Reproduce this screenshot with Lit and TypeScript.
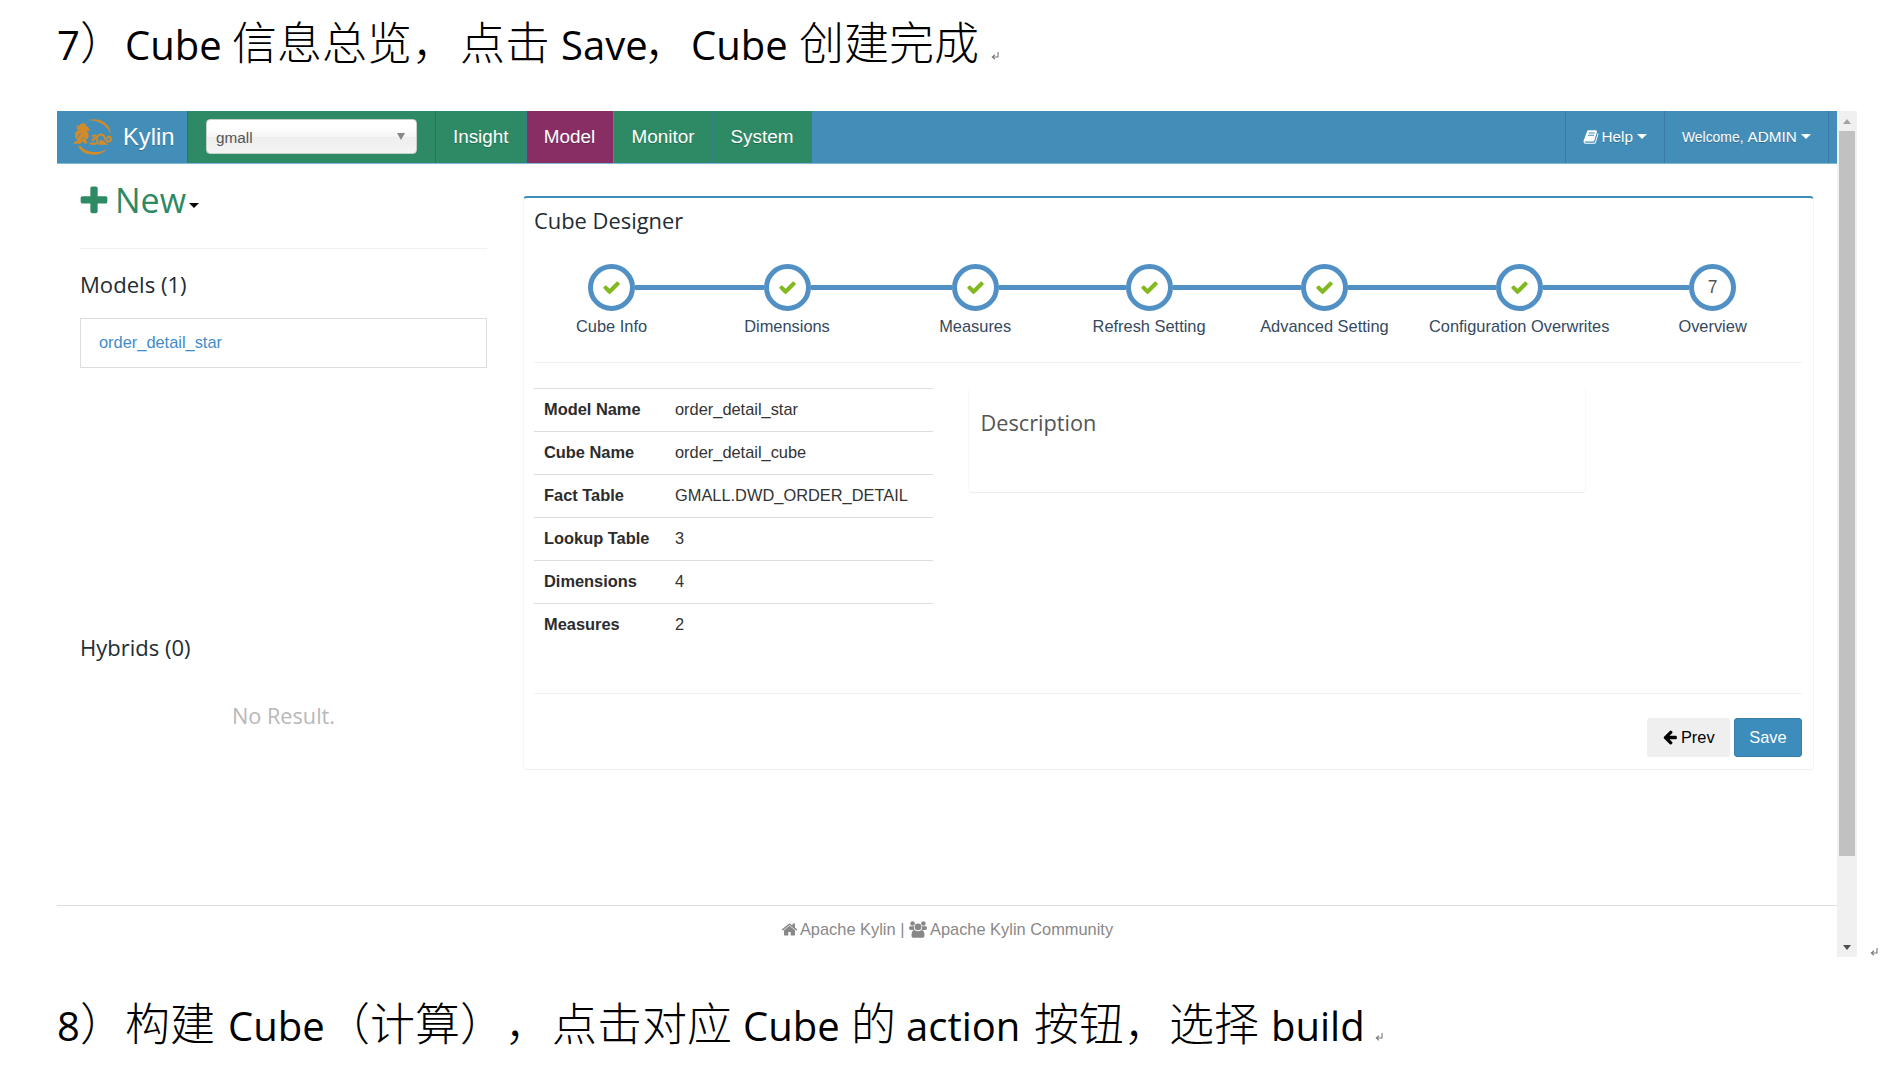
import { LitElement, html, css, svg } from "lit";
import { customElement } from "lit/decorators.js";

type Run = [text: string, width: number, latin?: boolean];

/* Captions above and below the window: each run has its own advance width. */
const CAPTION_TOP: Run[] = [
  ["7", 23, true], ["）", 45], ["Cube", 107, true], ["信息总览，", 228], ["点击", 101], ["Save", 83, true],
  ["，", 47], ["Cube", 108, true], ["创建完成", 192],
];
const CAPTION_BOTTOM: Run[] = [
  ["8", 23, true], ["）", 45], ["构建", 103], ["Cube", 97, true], ["（计算），", 227], ["点击对应", 191],
  ["Cube", 108, true], ["的", 55], ["action", 128, true], ["按钮，选择", 237], ["build", 104, true],
];

const STEPS: { label: string; gap: number; mark?: string }[] = [
  { label: "Cube Info", gap: 0 },
  { label: "Dimensions", gap: 128.5 },
  { label: "Measures", gap: 141.2 },
  { label: "Refresh Setting", gap: 126.9 },
  { label: "Advanced Setting", gap: 128.3 },
  { label: "Configuration Overwrites", gap: 147.8 },
  { label: "Overview", gap: 146.4, mark: "7" },
];

const ROWS = [
  ["Model Name", "order_detail_star"],
  ["Cube Name", "order_detail_cube"],
  ["Fact Table", "GMALL.DWD_ORDER_DETAIL"],
  ["Lookup Table", "3"],
  ["Dimensions", "4"],
  ["Measures", "2"],
];

const ICONS: Record<string, string> = {
  check: "M1671 566q0 40-28 68l-724 724-136 136q-28 28-68 28t-68-28l-136-136-362-362q-28-28-28-68t28-68l136-136q28-28 68-28t68 28l294 295 656-657q28-28 68-28t68 28l136 136q28 28 28 68z",
  plus: "M1600 736v192q0 40-28 68t-68 28h-416v416q0 40-28 68t-68 28h-192q-40 0-68-28t-28-68v-416h-416q-40 0-68-28t-28-68v-192q0-40 28-68t68-28h416v-416q0-40 28-68t68-28h192q40 0 68 28t28 68v416h416q40 0 68 28t28 68z",
  home: "M1472 992v480q0 26-19 45t-45 19h-384v-384h-256v384h-384q-26 0-45-19t-19-45v-480q0-1 .5-3t.5-3l575-474 575 474q1 2 1 6zm223-69l-62 74q-8 9-21 11h-3q-13 0-21-7l-692-577-692 577q-12 8-24 7-13-2-21-11l-62-74q-8-10-7-23.5t11-21.5l719-599q32-26 76-26t76 26l244 204v-195q0-14 9-23t23-9h192q14 0 23 9t9 23v408l219 182q10 8 11 21.5t-7 23.5z",
  left: "M1664 896v128q0 53-32.5 90.5t-84.5 37.5h-704l293 294q38 36 38 90t-38 90l-75 76q-37 37-90 37-52 0-91-37l-651-652q-37-37-37-90 0-52 37-91l651-650q38-38 91-38 52 0 90 38l75 74q38 38 38 91t-38 91l-293 293h704q52 0 84.5 37.5t32.5 90.5z",
  book: "M1703 478q40 57 18 129l-275 906q-19 64-76.5 107.5t-122.5 43.5h-923q-77 0-148.5-53.5t-99.5-131.5q-24-67-2-127 0-4 3-27t4-37q1-8-3-21.5t-3-19.5q2-11 8-21t16.5-23.5 16.5-23.5q23-38 45-91.5t30-91.5q3-10 .5-30t-.5-28q3-11 17-28t17-23q21-36 42-92t25-90q1-9-2.5-32t.5-28q4-13 22-30.5t22-22.5q19-26 42.5-84.5t27.5-96.5q1-8-3-25.5t-2-26.5q2-8 9-18t18-23 17-21q8-12 16.5-30.5t15-35 16-36 19.5-32 26.5-23.5 36-11.5 47.5 5.5l-1 3q38-9 51-9h761q74 0 114 56t18 130l-274 906q-36 119-71.5 153.5t-128.5 34.5h-869q-27 0-38 15-11 16-1 43 24 70 144 70h923q29 0 56-15.5t35-41.5l300-987q7-22 5-57 38 15 59 43zm-1064 2q-4 13 2 22.5t20 9.5h608q13 0 25.5-9.5t16.5-22.5l21-64q4-13-2-22.5t-20-9.5h-608q-13 0-25.5 9.5t-16.5 22.5zm-83 256q-4 13 2 22.5t20 9.5h608q13 0 25.5-9.5t16.5-22.5l21-64q4-13-2-22.5t-20-9.5h-608q-13 0-25.5 9.5t-16.5 22.5z",
};

const icon = (name: string) => html`<svg class="icon ${name}" viewBox="0 0 1792 1792">${svg`<path d=${ICONS[name]} />`}</svg>`;

const logo = html`<svg class="logo" viewBox="0 0 120 112">
  <path d="M46 6C82-3 114 18 113 50C107 26 80 7 46 6Z" />
  <path d="M15 84C28 114 78 120 103 92C80 107 40 106 23 84Z" />
  <path d="M30 10l3 8 7-2-1 7c8 4 12 10 10 17l-8-3c1 5 5 8 6 14 1 7-3 12-9 15 4 3 7 8 3 11l-8-2-4-5-7 7H0l7-7 8-3C4 60 3 48 10 40l8-5-8-3 3-4-4-6 10 1 4-6 5 1z" />
  <path class="swirl" d="M50 77h17c8 0 9-15-1-16-7 0-8 7-3 8M58 56c6-6 13-3 15 3" />
  <path class="swirl" d="M71 60c6-14 20-14 24-2 2 8 5 14 12 13 10-2 8-17-1-15-4 1-3 6 0 6" />
  <path d="M74 80c6-4 2-12 10-14 8 0 10 7 23 14z" />
  <path class="cut" d="M15 60c0-7 4-11 10-14M24 66c2-5 6-7 11-7" />
</svg>`;

const community = html`<svg class="icon users" viewBox="0 0 18 17">
  <circle cx="3.6" cy="2.5" r="2.3" /><circle cx="14.4" cy="2.5" r="2.3" />
  <path d="M1 5.2h4.3a4.5 4.5 0 0 0 .2 3.8H1.8Q0 9 0 7.2T1 5.2zM17 5.2h-4.3a4.5 4.5 0 0 1-.2 3.8h3.7Q18 9 18 7.2T17 5.2z" />
  <circle cx="9" cy="5.9" r="3.3" />
  <path d="M5.4 9q3.6 2.6 7.2 0 2.9.6 2.9 5.2 0 2.6-2.6 2.6H5.1q-2.6 0-2.6-2.6Q2.5 9.6 5.4 9z" />
</svg>`;

const returnMark = html`<svg class="mark" viewBox="0 0 8 8"><path d="M7 0v5H2M4 2.6L1.3 5 4 7.4" /></svg>`;

const caption = (runs: Run[], place: string) => html`<div class="caption ${place}">
  ${runs.map(([t, w, latin]) => html`<span class=${latin ? "latin" : "han"} style="width:${w}px">${t}</span>`)}${returnMark}
</div>`;

@customElement("app-root")
export class AppRoot extends LitElement {
  static styles = css`
    :host {
      display: block;
      width: 1885px;
      height: 1072px;
      overflow: hidden;
      background: #fff;
      color: #333;
      font-family: "Liberation Sans", Arial, sans-serif;
      font-size: 16.4px;
    }
    * { box-sizing: border-box; }
    .icon { display: block; flex: none; fill: currentColor; }
    .caption {
      display: flex;
      align-items: baseline;
      padding-left: 57px;
      color: #000;
      white-space: nowrap;
    }
    .high { height: 111px; --line: 82px; }
    .low { height: 115px; padding-top: 15px; --line: 100px; }
    .latin { flex: none; font: 400 40px/var(--line) "Open Sans", "Noto Sans", sans-serif; }
    .han { flex: none; font: 300 45px/var(--line) "Noto Sans CJK SC", sans-serif; text-spacing-trim: space-all; }
    .mark { width: 8px; height: 8px; fill: none; stroke: #777; stroke-width: 1.1; flex: none; }
    .stage { display: flex; height: 846px; padding-left: 57px; }
    .window { width: 1780px; display: flex; flex-direction: column; }

    .nav {
      display: flex;
      height: 52.5px;
      flex: none;
      background: #438eb9;
      border-bottom: 1px solid #83b7d6;
      color: #fff;
      font-size: 18.9px;
      line-height: 52px;
      text-shadow: 0 1px 0 rgba(0, 0, 0, 0.25);
    }
    .brand { width: 130px; display: flex; align-items: center; padding-left: 16px; gap: 10px; font-size: 23.8px; }
    .logo { width: 40px; height: 37.3px; fill: #d38a28; }
    .swirl { fill: none; stroke: #d38a28; stroke-width: 6; }
    .cut { fill: none; stroke: #438eb9; stroke-width: 2.5; }
    .picker { width: 249px; background: #2e8965; border-left: 1px solid #277a5c; border-right: 1px solid #26745a; padding: 8px 0 0 18px; }
    .select {
      width: 211px;
      height: 35px;
      display: flex;
      align-items: center;
      justify-content: space-between;
      padding: 2px 11px 0 9px;
      border: 1px solid #c5d0cb;
      border-radius: 4px;
      background: linear-gradient(#fff 20%, #f6f6f6 50%, #eee 52%, #f4f4f4);
      color: #555;
      font-size: 15.3px;
      line-height: 30px;
      text-shadow: none;
    }
    .drop { width: 0; border: 4px solid transparent; border-top: 7px solid #888; border-bottom: 0; margin-top: -3px; }
    .tab { background: #2e8965; border-right: 1px solid #377f89; text-align: center; }
    .insight { width: 90.5px; }
    .model { width: 87px; background: #892e65; border-right: 1px solid #438eb9; }
    .monitor { width: 99px; padding-left: 1px; }
    .system { width: 99px; padding-left: 1px; }
    .fill { flex: 1; }
    .menu { display: flex; align-items: center; border-left: 1px solid #3a7ba6; font-size: 15.3px; }
    .help { width: 99px; padding-left: 17px; }
    .user { width: 164.5px; padding-left: 17.5px; }
    .end { width: 9px; border-left: 1px solid #3a7ba6; }
    .book { width: 16px; height: 16px; margin-right: 3px; }
    .small { font-size: 13.9px; margin-right: 4px; }
    .caret { width: 0; border: 5px solid transparent; border-top: 5px solid currentColor; border-bottom: 0; margin-left: 4px; }

    .body { display: flex; flex: 1; min-height: 0; }
    .side { width: 407px; margin-left: 23px; }
    .head { font-family: "Open Sans", "Noto Sans", sans-serif; font-size: 21.9px; line-height: 30px; white-space: nowrap; color: #222d32; }
    .new { display: flex; align-items: center; margin-top: 17px; height: 39px; color: #2e8965; font-size: 34px; line-height: 39px; }
    .plus { width: 34px; height: 34px; margin: 2px 4px 0 -3px; }
    .new .caret { color: #000; margin: 11px 0 0 3px; }
    .rule { height: 1px; background: #f0f0f0; }
    .side .rule { margin-top: 28.5px; }
    .models { margin-top: 19.5px; font-size: 22.1px; }
    .item { margin-top: 19.5px; height: 50px; border: 1px solid #ddd; padding-left: 18px; line-height: 47px; color: #428bca; }
    .hybrids { margin-top: 263.5px; font-size: 22px; }
    .none { margin-top: 39px; text-align: center; color: #b8b8b8; font-size: 21.7px; }

    .panel {
      width: 1291px;
      height: 574px;
      margin: 32.5px 0 0 36px;
      padding: 8px 11px 0 10px;
      border: 1px solid #f4f4f4;
      border-top: 2.5px solid #3c8dbc;
      border-bottom: 1.5px solid #efefef;
      border-radius: 4px;
    }
    .steps { display: flex; margin: 28px 0 0 54px; height: 73px; }
    .step { width: 47px; flex: none; display: flex; flex-direction: column; align-items: center; }
    .ring {
      width: 47px;
      height: 47px;
      display: grid;
      place-items: center;
      border: 5.5px solid #5090c4;
      border-radius: 50%;
      font-size: 17.5px;
      color: #555;
    }
    .check { width: 19px; height: 19px; color: #82b91e; }
    .link { flex: none; height: 5px; margin-top: 20.5px; background: #5090c4; }
    .label { margin-top: 4.5px; line-height: 20px; white-space: nowrap; color: #34495e; }
    .r1 { margin-top: 25px; }
    .info { display: flex; margin-top: 25px; height: 305px; }
    .table { width: 398.5px; }
    .row { display: flex; height: 43.1px; border-top: 1px solid #ddd; line-height: 41px; padding-left: 10px; }
    .key { width: 131px; font-weight: 700; color: #2c2c2c; }
    .desc {
      width: 618px;
      height: 104.5px;
      margin-left: 35px;
      padding: 19px 0 0 12px;
      border: 1px solid #f8f8f8;
      border-top-color: #fff;
      border-bottom: 1.5px solid #ececec;
      border-radius: 4px;
    }
    .desc .head { color: #555; font-size: 21.7px; }
    .actions { display: flex; justify-content: flex-end; gap: 4.5px; margin-top: 23.5px; }
    .btn { height: 39.5px; display: flex; align-items: center; justify-content: center; border-radius: 3px; }
    .prev { width: 82.5px; background: #efefef; color: #000; gap: 3px; }
    .left { width: 16px; height: 16px; }
    .save { width: 68px; background: #3c8dbc; border: 1px solid #367fa9; color: #fff; }

    .footer {
      flex: none;
      height: 52px;
      display: flex;
      justify-content: center;
      padding-bottom: 4px;
      align-items: center;
      border-top: 1px solid #ddd;
      color: #888;
      white-space: pre;
    }
    .home { width: 17px; height: 17px; margin: 0 2px 0 0; }
    .users { width: 18px; height: 17px; margin: 0 3px 0 0; }
    .scroll {
      width: 20px;
      background: #f0f0f0;
      display: flex;
      flex-direction: column;
      align-items: center;
    }
    .up { width: 0; margin: 8px 0 7px; border: 4.5px solid transparent; border-bottom: 5px solid #a3a3a3; border-top: 0; }
    .thumb { width: 16px; height: 725px; background: #c1c1c1; }
    .down { width: 0; margin-top: 89px; border: 4.5px solid transparent; border-top: 5px solid #505050; border-bottom: 0; }
    .stage > .mark { align-self: flex-end; margin: 0 0 1px 13px; }
  `;

  render() {
    return html`
      ${caption(CAPTION_TOP, "high")}
      <div class="stage">
        <div class="window">
          <div class="nav">
            <div class="brand">${logo}<span>Kylin</span></div>
            <div class="picker"><div class="select"><span>gmall</span><i class="drop"></i></div></div>
            <div class="tab insight">Insight</div>
            <div class="tab model">Model</div>
            <div class="tab monitor">Monitor</div>
            <div class="tab system">System</div>
            <div class="fill"></div>
            <div class="menu help">${icon("book")}<span>Help</span><i class="caret"></i></div>
            <div class="menu user"><span class="small">Welcome,</span><span>ADMIN</span><i class="caret"></i></div>
            <div class="end"></div>
          </div>
          <div class="body">
            <div class="side">
              <div class="head new">${icon("plus")}<span>New</span><i class="caret"></i></div>
              <div class="rule"></div>
              <div class="head models">Models (1)</div>
              <div class="item">order_detail_star</div>
              <div class="head hybrids">Hybrids (0)</div>
              <div class="head none">No Result.</div>
            </div>
            <div class="panel">
              <div class="head">Cube Designer</div>
              <div class="steps">
                ${STEPS.map((s) => html`
                  ${s.gap ? html`<div class="link" style="width:${s.gap}px"></div>` : ""}
                  <div class="step">
                    <div class="ring">${s.mark ?? icon("check")}</div>
                    <div class="label">${s.label}</div>
                  </div>`)}
              </div>
              <div class="rule r1"></div>
              <div class="info">
                <div class="table">
                  ${ROWS.map(([k, v]) => html`<div class="row"><span class="key">${k}</span><span>${v}</span></div>`)}
                </div>
                <div class="desc"><div class="head">Description</div></div>
              </div>
              <div class="rule"></div>
              <div class="actions">
                <div class="btn prev">${icon("left")}<span>Prev</span></div>
                <div class="btn save">Save</div>
              </div>
            </div>
          </div>
          <div class="footer">${icon("home")}<span>Apache Kylin | </span>${community}<span>Apache Kylin Community</span></div>
        </div>
        <div class="scroll"><i class="up"></i><i class="thumb"></i><i class="down"></i></div>
        ${returnMark}
      </div>
      ${caption(CAPTION_BOTTOM, "low")}
    `;
  }
}
